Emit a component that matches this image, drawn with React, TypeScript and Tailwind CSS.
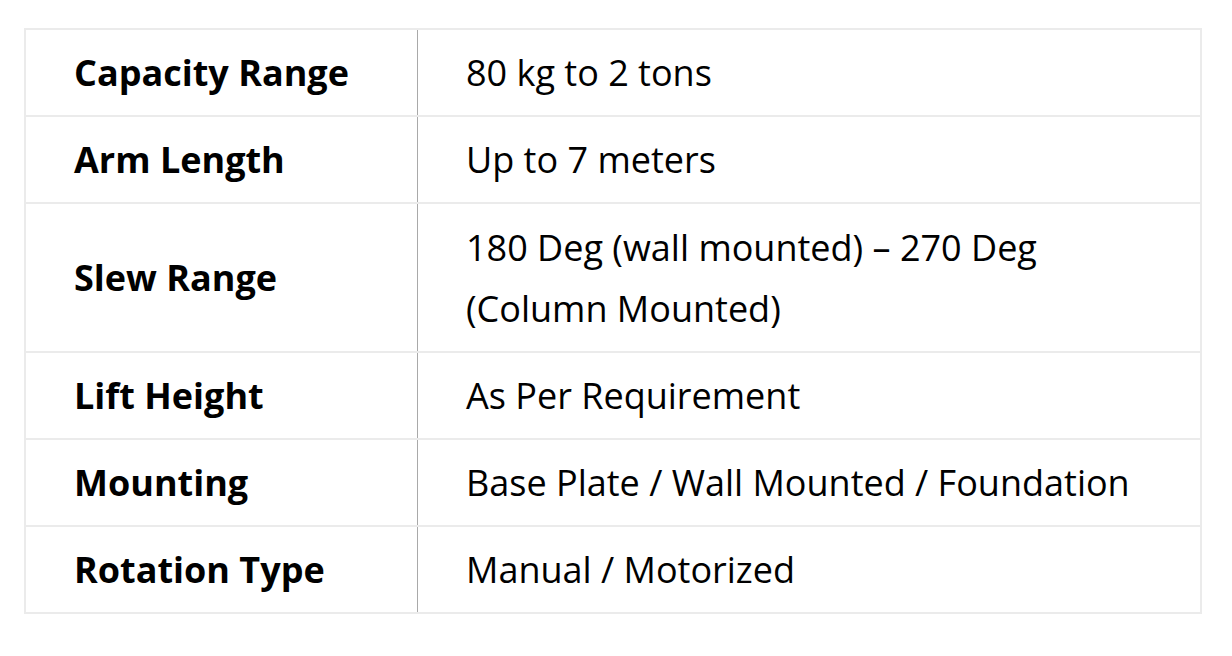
const specs = [
  { label: "Capacity Range", value: "80 kg to 2 tons" },
  { label: "Arm Length", value: "Up to 7 meters" },
  { label: "Slew Range", value: "180 Deg (wall mounted) – 270 Deg (Column Mounted)", tall: true },
  { label: "Lift Height", value: "As Per Requirement" },
  { label: "Mounting", value: "Base Plate / Wall Mounted / Foundation" },
  { label: "Rotation Type", value: "Manual / Motorized" },
]

export default function App() {
  return (
    <div className="min-h-screen w-[1232px] bg-white pl-[24px] pt-[28px] font-['Open_Sans',sans-serif] text-[36px] leading-[61px] text-black">
      <div className="w-[1178px] border-2 border-[#ebebeb]">
        {specs.map((row, i) => (
          <div
            key={row.label}
            className={
              (i < specs.length - 1 ? "border-b-2 border-[#ebebeb] " : "") +
              (row.tall ? "min-h-[149px] " : "") +
              "grid grid-cols-[392px_1fr]"
            }
          >
            <div className="flex items-center border-r border-[#a9a9a9] px-[48px] py-3 font-bold">
              {row.label}
            </div>
            <div className="flex items-center pl-[48px] pr-[40px] py-3">{row.value}</div>
          </div>
        ))}
      </div>
    </div>
  )
}
